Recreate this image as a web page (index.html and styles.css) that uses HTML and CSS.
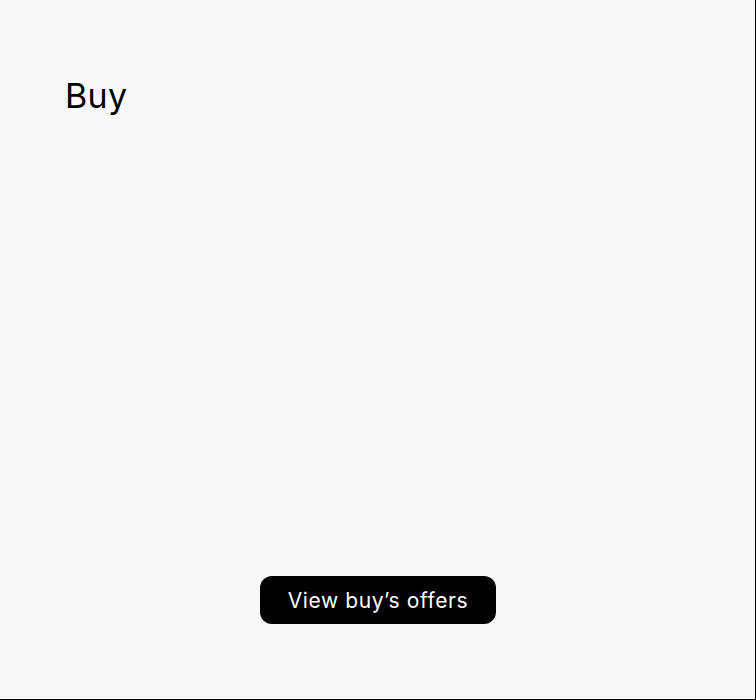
FILE: index.html
```html
<!DOCTYPE html>
<html>
<head>
<meta charset="utf-8">
<link rel="stylesheet" href="styles.css">
</head>
<body>
<main class="page">
  <h1 class="title">Buy</h1>
  <div class="actions">
    <button class="btn">View buy’s offers</button>
  </div>
</main>
</body>
</html>
```
FILE: styles.css
```css
html, body {
  margin: 0;
  padding: 0;
}
body {
  background: #f8f8f8;
  font-family: Inter, "Noto Sans", sans-serif;
}
.page {
  box-sizing: border-box;
  width: 756px;
  height: 700px;
  border-right: 1px solid #000;
  border-bottom: 1px solid #000;
  display: flex;
  flex-direction: column;
  justify-content: space-between;
  padding: 75px 0 75px 65px;
}
.title {
  margin: 0;
  font-size: 34px;
  font-weight: 400;
  letter-spacing: 0.3px;
  color: #000;
}
.actions {
  display: flex;
  justify-content: center;
  padding-right: 64px;
}
.btn {
  height: 48px;
  padding: 1px 28px 0;
  border: none;
  border-radius: 12px;
  background: #000;
  color: #fff;
  font-family: Inter, "Noto Sans", sans-serif;
  font-size: 21px;
  font-weight: 400;
  letter-spacing: 0.6px;
}
```
